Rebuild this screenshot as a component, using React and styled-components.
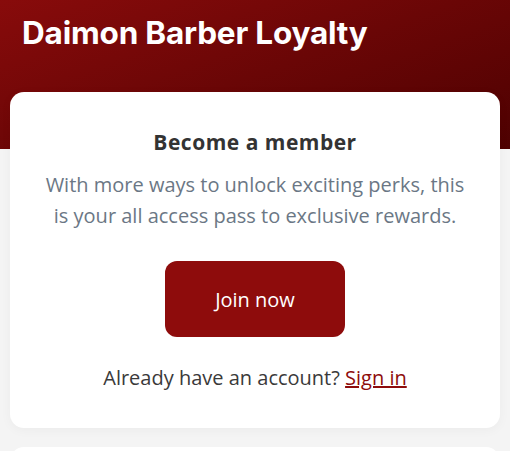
import React from "react";
import styled, { createGlobalStyle } from "styled-components";

const GlobalStyle = createGlobalStyle`
  html, body {
    margin: 0;
    padding: 0;
    background: #f4f4f4;
  }
  body {
    font-family: "Open Sans", Lato, sans-serif;
  }
`;

function App() {
  return (
    <>
      <GlobalStyle />
      <Page>
        <Header>
          <Brand>Daimon Barber Loyalty</Brand>
        </Header>
        <Card>
          <Title>Become a member</Title>
          <Blurb>
            With more ways to unlock exciting perks, this is your all access
            pass to exclusive rewards.
          </Blurb>
          <JoinButton type="button">Join now</JoinButton>
          <SignInLine>
            Already have an account? <SignInLink href="#">Sign in</SignInLink>
          </SignInLine>
        </Card>
        <NextCard />
      </Page>
    </>
  );
}

//styled components
const Page = styled.div`
  display: flex;
  flex-direction: column;
  height: 451px;
  overflow: hidden;
`;
const Header = styled.header`
  flex: none;
  height: 149px;
  box-sizing: border-box;
  padding: 13px 22px 0;
  background: linear-gradient(160deg, #880b0b 0%, #6a0606 50%, #4e0101 100%);
`;
const Brand = styled.h1`
  margin: 0;
  color: #fff;
  font-family: Inter, "Open Sans", sans-serif;
  font-weight: 700;
  font-size: 31.5px;
  line-height: 40px;
  letter-spacing: -0.2px;
`;
const Card = styled.section`
  flex: none;
  margin: -57px 10px 0;
  height: 336px;
  box-sizing: border-box;
  padding: 36px 20px 0;
  background: #fff;
  border-radius: 14px;
  box-shadow: 0 2px 12px rgba(0, 0, 0, 0.04);
  display: flex;
  flex-direction: column;
  align-items: center;
  text-align: center;
`;
const Title = styled.h2`
  margin: 0;
  color: #333;
  font-size: 21px;
  font-weight: 700;
  line-height: 28px;
  letter-spacing: 0.5px;
`;
const Blurb = styled.p`
  margin: 13px 0 0;
  max-width: 430px;
  color: #6b7785;
  font-size: 20px;
  line-height: 31px;
`;
const JoinButton = styled.button`
  flex: none;
  margin-top: 30px;
  width: 180px;
  height: 76px;
  border: none;
  border-radius: 12px;
  background: #8e0c0c;
  color: #fff;
  font-family: inherit;
  font-size: 20px;
`;
const SignInLine = styled.p`
  margin: 28px 0 0;
  color: #3a3a3a;
  font-size: 20px;
  line-height: 26px;
`;
const SignInLink = styled.a`
  color: #8e0c0c;
  text-decoration: underline;
`;
const NextCard = styled.div`
  flex: none;
  margin: 19px 10px 0;
  height: 40px;
  background: #fff;
  border-radius: 14px;
`;

export default App;
